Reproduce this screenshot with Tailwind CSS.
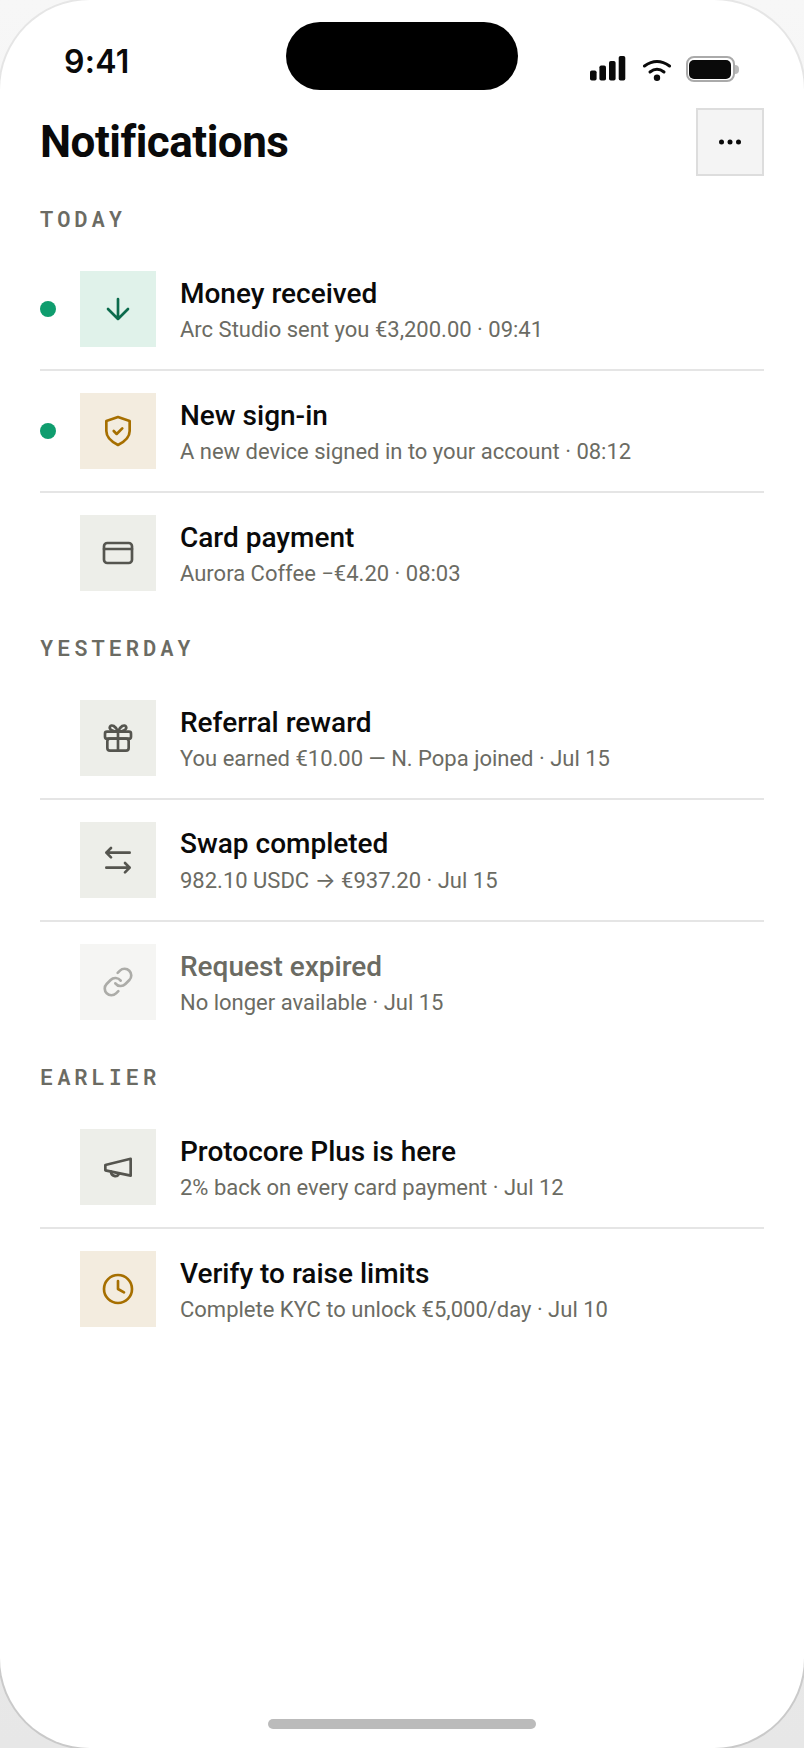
<!DOCTYPE html>
<html><head><meta charset="utf-8"><script src="https://cdn.jsdelivr.net/npm/@tailwindcss/browser@4"></script></head>
<body class="m-0 bg-[#ececec]">
<div class="relative w-[804px] h-[1748px] overflow-hidden bg-gradient-to-b from-[#f7f7f7] to-[#e7e7e7] font-['Roboto',sans-serif]">
  <div class="absolute -inset-[2px] rounded-[92px] bg-gradient-to-b from-[#e6e6e6] to-[#c9c9c9] p-[2px]"><div class="w-full h-full rounded-[90px] bg-white"></div></div>
  <div class="absolute left-[286px] top-[22px] w-[232px] h-[68px] rounded-[34px] bg-black"></div>
  <div class="relative">
  <div class="flex justify-between items-center h-[60px] pt-0 pl-[64px] pr-[65px] translate-y-[32px]">
    <span class="font-['Inter',sans-serif] font-semibold text-[32px] leading-[36px] text-[#0a0a0a] tracking-[0.3px]">9:41</span>
    <div class="flex items-center mt-[14px]">
      <svg width="36" height="26" viewBox="0 0 36 26" fill="#0a0a0a" class="mr-[16px]"><rect x="0" y="14.500" width="6.600" height="10" rx="1.800"/><rect x="9.400" y="9.500" width="6.600" height="15" rx="1.800"/><rect x="19" y="5" width="6.600" height="19.500" rx="1.800"/><rect x="28.700" y="0" width="6.600" height="24.500" rx="1.800"/></svg>
      <svg width="30" height="24" viewBox="0 0 30 24" fill="none" stroke="#0a0a0a" stroke-width="3" stroke-linecap="round" class="mr-[14px]"><path d="M2.500 9 Q15 0 27.500 9"/><path d="M8 15 Q15 9.500 22 15"/><circle cx="15" cy="20.700" r="3.200" fill="#0a0a0a" stroke="none"/></svg>
      <div class="flex items-center">
        <div class="w-[49px] h-[26px] rounded-[8px] border-[2.5px] border-[#aaaaaa] p-[1.5px]"><div class="w-full h-full rounded-[5px] bg-[#0a0a0a]"></div></div>
        <div class="w-[4px] h-[9px] bg-[#bbbbbb] rounded-r-[4px] ml-[0.5px]"></div>
      </div>
    </div>
  </div>
  <div class="flex justify-between items-center px-[40px] pt-[48px]">
    <h1 class="font-bold text-[44px] leading-[68px] tracking-[-0.5px] text-[#0a0a0a]">Notifications</h1>
    <button class="flex items-center justify-center w-[68px] h-[68px] bg-[#f4f4f4] border-2 border-[#dddddd]">
      <svg width="24" height="8" viewBox="0 0 24 8" fill="#0a0a0a"><circle cx="3.500" cy="4" r="2.500"/><circle cx="12" cy="4" r="2.500"/><circle cx="20.500" cy="4" r="2.500"/></svg>
    </button>
  </div>

  <div class="px-[40px]">
    <section class="mt-[29px]">
      <h2 class="font-['Roboto_Mono',Roboto,monospace] font-semibold text-[22px] leading-[28px] tracking-[3.96px] text-[#6b6b63] mb-[16px]">TODAY</h2>
      <div class="flex items-center py-[22px] border-b-2 border-[#e5e5e5] gap-[24px]">
        <span class="w-[16px] h-[16px] rounded-full bg-[#0f9d6e]"></span>
        <div class="w-[76px] h-[76px] flex items-center justify-center bg-[#e0f2ea]"><svg width="32" height="32" viewBox="0 0 24 24" fill="none" stroke="#0b6b4c" stroke-width="2" stroke-linecap="round" stroke-linejoin="round"><path d="M12 4.500v15M4.500 12l7.500 7.500 7.500-7.500"/></svg></div>
        <div class="pt-[2px]"><div class="font-medium text-[28px] leading-[36px] text-[#0a0a0a]">Money received</div><div class="text-[22px] leading-[30px] mt-[3px] text-[#6b6b63]">Arc Studio sent you €3,200.00 · 09:41</div></div>
      </div>
      <div class="flex items-center py-[22px] border-b-2 border-[#e5e5e5] gap-[24px]">
        <span class="w-[16px] h-[16px] rounded-full bg-[#0f9d6e]"></span>
        <div class="w-[76px] h-[76px] flex items-center justify-center bg-[#f3ecdf]"><svg width="32" height="32" viewBox="0 0 24 24" fill="none" stroke="#a66f00" stroke-width="2" stroke-linecap="round" stroke-linejoin="round"><path d="M12 1.500 20.750 4.500V12C20.750 17.500 16 20.500 12 22.500 8 20.500 3.250 17.500 3.250 12V4.500z"/><path d="M8.800 12l2.200 2.200 4.200-4.200"/></svg></div>
        <div class="pt-[2px]"><div class="font-medium text-[28px] leading-[36px] text-[#0a0a0a]">New sign-in</div><div class="text-[22px] leading-[30px] mt-[3px] text-[#6b6b63]">A new device signed in to your account · 08:12</div></div>
      </div>
      <div class="flex items-center py-[22px] gap-[24px]">
        <span class="w-[16px] h-[16px]"></span>
        <div class="w-[76px] h-[76px] flex items-center justify-center bg-[#edeee9]"><svg width="32" height="32" viewBox="0 0 24 24" fill="none" stroke="#55554f" stroke-width="2" stroke-linecap="round" stroke-linejoin="round"><rect x="1.500" y="4.500" width="21" height="15" rx="2.500"/><path d="M1.500 9h21"/></svg></div>
        <div class="pt-[2px]"><div class="font-medium text-[28px] leading-[36px] text-[#0a0a0a]">Card payment</div><div class="text-[22px] leading-[30px] mt-[3px] text-[#6b6b63]">Aurora Coffee −€4.20 · 08:03</div></div>
      </div>
    </section>
    <section class="mt-[21px]">
      <h2 class="font-['Roboto_Mono',Roboto,monospace] font-semibold text-[22px] leading-[28px] tracking-[3.96px] text-[#6b6b63] mb-[16px]">YESTERDAY</h2>
      <div class="flex items-center py-[22px] border-b-2 border-[#e5e5e5] gap-[24px]">
        <span class="w-[16px] h-[16px]"></span>
        <div class="w-[76px] h-[76px] flex items-center justify-center bg-[#edeee9]"><svg width="32" height="32" viewBox="0 0 24 24" fill="none" stroke="#55554f" stroke-width="2" stroke-linecap="round" stroke-linejoin="round"><rect x="4" y="12.500" width="16" height="9" rx="2"/><rect x="2.250" y="7.250" width="19.500" height="5.250" rx="1.500"/><path d="M12 7.250V21.500M12 7.250C10.500 3 7 1.500 6 3.500S8 7.250 12 7.250zM12 7.250C13.500 3 17 1.500 18 3.500S16 7.250 12 7.250z"/></svg></div>
        <div class="pt-[2px]"><div class="font-medium text-[28px] leading-[36px] text-[#0a0a0a]">Referral reward</div><div class="text-[22px] leading-[30px] mt-[3px] text-[#6b6b63]">You earned €10.00 — N. Popa joined · Jul 15</div></div>
      </div>
      <div class="flex items-center py-[22px] border-b-2 border-[#e5e5e5] gap-[24px]">
        <span class="w-[16px] h-[16px]"></span>
        <div class="w-[76px] h-[76px] flex items-center justify-center bg-[#edeee9]"><svg width="32" height="32" viewBox="0 0 24 24" fill="none" stroke="#55554f" stroke-width="2" stroke-linecap="round" stroke-linejoin="round"><path d="M3.250 6.500h17.500M6.750 3 3.250 6.500 6.750 10M3.250 17.750h17.500M17.250 14.250l3.500 3.500-3.500 3.500"/></svg></div>
        <div class="pt-[2px]"><div class="font-medium text-[28px] leading-[36px] text-[#0a0a0a]">Swap completed</div><div class="text-[22px] leading-[30px] mt-[3px] text-[#6b6b63]">982.10 USDC <span class="font-['Inter',sans-serif]">→</span> €937.20 · Jul 15</div></div>
      </div>
      <div class="flex items-center py-[22px] gap-[24px]">
        <span class="w-[16px] h-[16px]"></span>
        <div class="w-[76px] h-[76px] flex items-center justify-center bg-[#f5f5f3]"><svg width="32" height="32" viewBox="0 0 24 24" fill="none" stroke="#acaca8" stroke-width="2" stroke-linecap="round" stroke-linejoin="round"><path d="M10 13a5 5 0 0 0 7.540.54l3-3a5 5 0 0 0-7.070-7.070l-1.720 1.710"/><path d="M14 11a5 5 0 0 0-7.540-.54l-3 3a5 5 0 0 0 7.070 7.070l1.710-1.710"/></svg></div>
        <div class="pt-[2px]"><div class="font-medium text-[28px] leading-[36px] text-[#6b6b63]">Request expired</div><div class="text-[22px] leading-[30px] mt-[3px] text-[#6b6b63]">No longer available · Jul 15</div></div>
      </div>
    </section>
    <section class="mt-[21px]">
      <h2 class="font-['Roboto_Mono',Roboto,monospace] font-semibold text-[22px] leading-[28px] tracking-[3.96px] text-[#6b6b63] mb-[16px]">EARLIER</h2>
      <div class="flex items-center py-[22px] border-b-2 border-[#e5e5e5] gap-[24px]">
        <span class="w-[16px] h-[16px]"></span>
        <div class="w-[76px] h-[76px] flex items-center justify-center bg-[#edeee9]"><svg width="32" height="32" viewBox="0 0 24 24" fill="none" stroke="#55554f" stroke-width="2" stroke-linecap="round" stroke-linejoin="round"><path d="M2.500 10.500 21.500 5.800V18.500L2.500 14.500z"/><path d="M6.800 15.500a3.200 3.200 0 0 0 6 1.600"/></svg></div>
        <div class="pt-[2px]"><div class="font-medium text-[28px] leading-[36px] text-[#0a0a0a]">Protocore Plus is here</div><div class="text-[22px] leading-[30px] mt-[3px] text-[#6b6b63]">2% back on every card payment · Jul 12</div></div>
      </div>
      <div class="flex items-center py-[22px] gap-[24px]">
        <span class="w-[16px] h-[16px]"></span>
        <div class="w-[76px] h-[76px] flex items-center justify-center bg-[#f3ecdf]"><svg width="32" height="32" viewBox="0 0 24 24" fill="none" stroke="#a66f00" stroke-width="2" stroke-linecap="round" stroke-linejoin="round"><circle cx="12" cy="12" r="10.500"/><path d="M12 6V12l4.500 2.500"/></svg></div>
        <div class="pt-[2px]"><div class="font-medium text-[28px] leading-[36px] text-[#0a0a0a]">Verify to raise limits</div><div class="text-[22px] leading-[30px] mt-[3px] text-[#6b6b63]">Complete KYC to unlock €5,000/day · Jul 10</div></div>
      </div>
    </section>
  </div>
  </div>
  <div class="absolute left-[268px] bottom-[19px] w-[268px] h-[10px] rounded-full bg-[#bbbbbb]"></div>
</div>
</body></html>
